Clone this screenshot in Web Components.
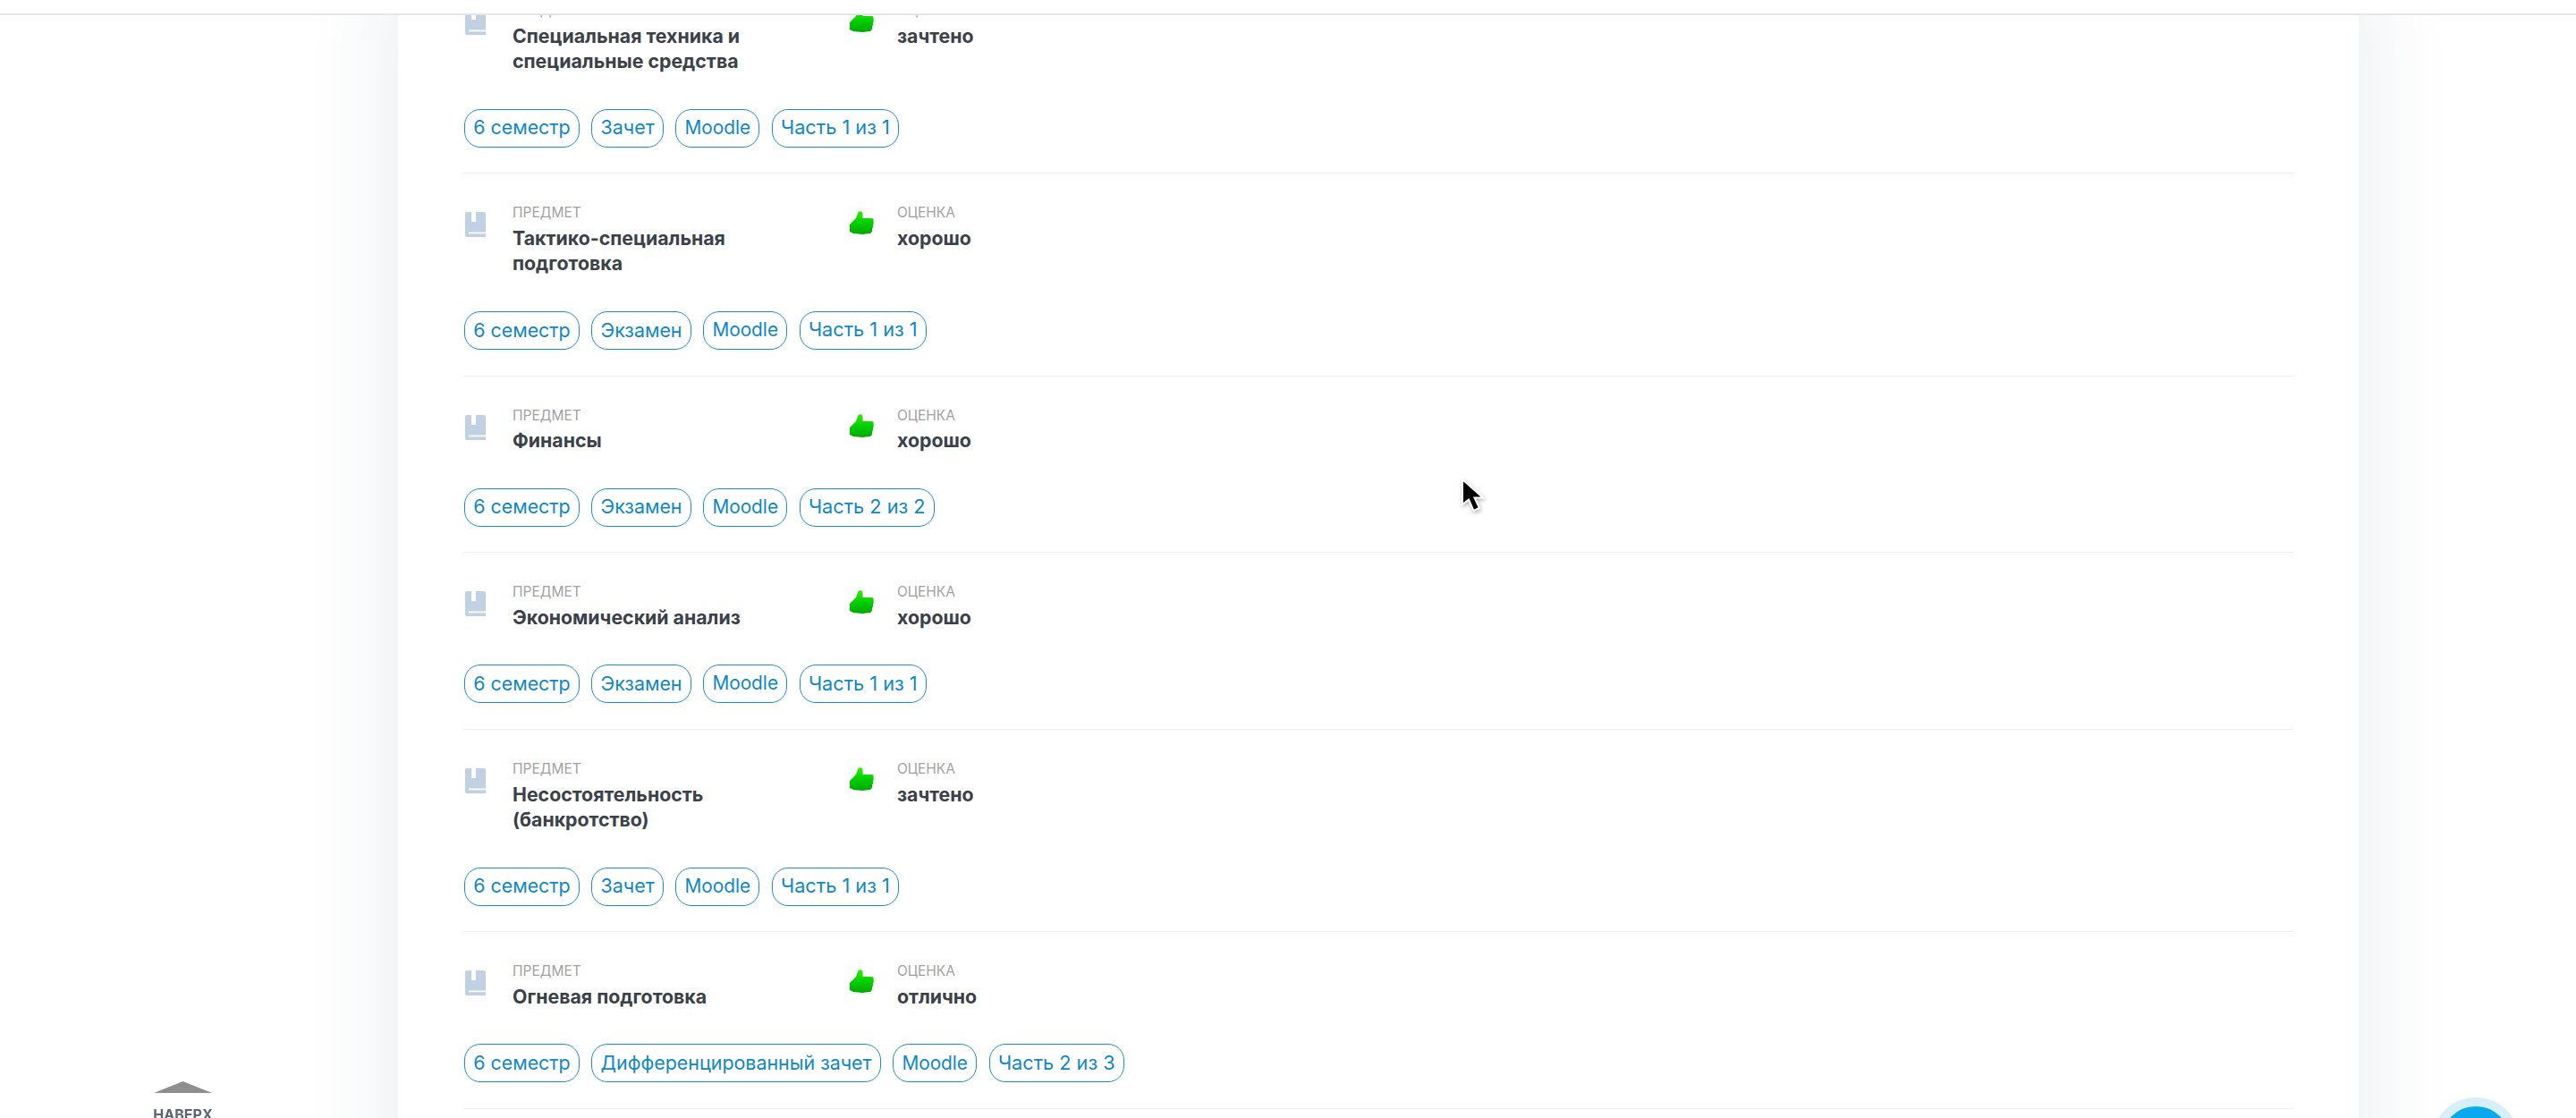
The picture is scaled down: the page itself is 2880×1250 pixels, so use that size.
<!DOCTYPE html>
<html lang="ru"><head><meta charset="utf-8"><title>Зачётная книжка</title>
<style>
html,body{margin:0;padding:0;height:1250px;overflow:hidden;background:#fff;font-family:Inter,"Liberation Sans",sans-serif}
</style></head><body>
<top-bar></top-bar>
<grade-card>
<subject-row name="Специальная техника и специальные средства" grade="зачтено" tags="6 семестр|Зачет|Moodle|Часть 1 из 1"></subject-row>
<subject-row name="Тактико-специальная подготовка" grade="хорошо" tags="6 семестр|Экзамен|Moodle|Часть 1 из 1"></subject-row>
<subject-row name="Финансы" grade="хорошо" tags="6 семестр|Экзамен|Moodle|Часть 2 из 2"></subject-row>
<subject-row name="Экономический анализ" grade="хорошо" tags="6 семестр|Экзамен|Moodle|Часть 1 из 1"></subject-row>
<subject-row name="Несостоятельность (банкротство)" grade="зачтено" tags="6 семестр|Зачет|Moodle|Часть 1 из 1"></subject-row>
<subject-row name="Огневая подготовка" grade="отлично" tags="6 семестр|Дифференцированный зачет|Moodle|Часть 2 из 3"></subject-row>
</grade-card>
<back-top></back-top>
<chat-fab></chat-fab>
<mouse-cursor></mouse-cursor>
<script>
const def=(n,html,extra)=>customElements.define(n,class extends HTMLElement{
  connectedCallback(){ if(this.shadowRoot)return; const r=this.attachShadow({mode:'open'}); r.innerHTML=html; extra&&extra(this,r);}
});
def('top-bar',`<style>:host{display:block;position:fixed;z-index:5;left:0;top:0;width:100%;height:15px;background:#fff;border-bottom:2px solid #e4e4e4}</style>`);
def('grade-card',`<style>:host{display:block;box-sizing:border-box;width:2192px;margin:-32px 0 0 445px;padding:0 73px;background:#fff;box-shadow:0 0 100px rgba(40,60,100,.11);min-height:1400px}</style><slot></slot>`);
def('tag-pill',`<style>:host{display:inline-flex;align-items:center;box-sizing:border-box;height:43px;padding:0 9.200px;border:1px solid #1a8fcb;border-radius:18px;color:#1087c6;font-size:21.400px;line-height:1;white-space:nowrap}:host([latin]){font-size:20.800px}:host([wide]){font-size:21.700px}</style><slot></slot>`);
const book=`<svg width="23" height="28" viewBox="0 0 23 28"><path fill="#bfd1e3" d="M0 2a2 2 0 0 1 2-2h5v11h5V0h9a2 2 0 0 1 2 2v26H2a2 2 0 0 1-2-2z"/><path fill="#fff" d="M4 22.500h19v1.800H4z"/></svg>`;
const thumb=`<svg width="27" height="26" viewBox="0 0 27 26"><defs><linearGradient id="g" x1="0" y1="0" x2="0" y2="1"><stop offset="0" stop-color="#30ee00"/><stop offset=".55" stop-color="#00cc00"/><stop offset="1" stop-color="#00a800"/></linearGradient></defs><path fill="url(#g)" d="M0 15 7 8 9.500 1 12.500 0 14.500 2 14.500 8H24.500C26.500 8 27 9.500 26.500 11.500 27 13 26.800 14.500 26 15.500 26.500 17 26 18.500 25 19.500 25.500 21.500 24.500 25 22.500 25L14 26 4 25 0 23z"/></svg>`;
def('subject-row',`<style>
:host{display:block;padding:31px 0 28.800px;border-bottom:1px solid #eeeff1}
.top{display:flex;align-items:flex-start;margin-bottom:39px}
.col{display:flex;box-sizing:border-box}
.a{width:432px}.a .ic{width:55px;padding:12px 0 0 2px;box-sizing:border-box}.a .tx{width:325px}
.b .ic{width:53px;padding-top:11px}
.l{font-size:15.500px;line-height:25px;margin-bottom:1.500px;color:#a2a2a2;text-transform:uppercase}
.v{font-size:21.300px;line-height:28.500px;font-weight:700;color:#3a4149}
.tags{display:flex;gap:13.500px;padding-left:1px}
svg{display:block;filter:blur(.4px)}
</style>
<div class="top"><div class="col a"><div class="ic">${book}</div><div class="tx"><div class="l">Предмет</div><div class="v" id="n"></div></div></div>
<div class="col b"><div class="ic">${thumb}</div><div class="tx"><div class="l">Оценка</div><div class="v" id="g2"></div></div></div></div>
<div class="tags" id="t"></div>`,(h,r)=>{
 r.getElementById('n').textContent=h.getAttribute('name');
 r.getElementById('g2').textContent=h.getAttribute('grade');
 const t=r.getElementById('t');
 h.getAttribute('tags').split('|').forEach(x=>{const p=document.createElement('tag-pill');p.textContent=x;if(x==='Moodle')p.setAttribute('latin','');if(x.startsWith('Часть'))p.setAttribute('wide','');t.appendChild(p)});
});
def('back-top',`<style>:host{display:flex;flex-direction:column;align-items:center;position:fixed;z-index:4;left:172px;top:1209px;width:65px;font-size:16px;font-weight:700;color:#5a6675;line-height:20px}svg{display:block;margin-bottom:13.500px}</style><svg width="65" height="13" viewBox="0 0 65 13"><path fill="#8e8e8e" d="M0 13 32.500 0 65 13z"/></svg><span>НАВЕРХ</span>`);
def('chat-fab',`<style>:host{display:block;position:fixed;z-index:4;left:2719px;top:1227px;width:98px;height:98px;box-sizing:border-box;border-radius:50%;background:#0aa9ee;border:10px solid #d7eefb}</style>`);
def('mouse-cursor',`<style>:host{display:block;position:fixed;z-index:6;left:1630px;top:532px;width:34px;height:46px}svg{display:block;filter:drop-shadow(1px 2px 2px rgba(0,0,0,.3))}</style><svg width="34" height="46" viewBox="0 0 34 46"><path fill="#000" stroke="#fff" stroke-width="2" d="M5 4V32L12 26.500 17.500 39 24 36 18.500 24.500H28z"/></svg>`);
</script>
</body></html>
